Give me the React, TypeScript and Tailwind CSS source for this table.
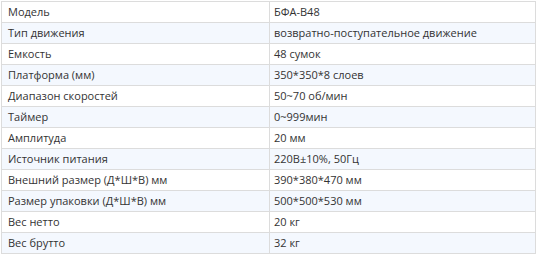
import React from "react";

const rows: [string, string][] = [
  ["Модель", "БФА-B48"],
  ["Тип движения", "возвратно-поступательное движение"],
  ["Емкость", "48 сумок"],
  ["Платформа (мм)", "350*350*8 слоев"],
  ["Диапазон скоростей", "50~70 об/мин"],
  ["Таймер", "0~999мин"],
  ["Амплитуда", "20 мм"],
  ["Источник питания", "220В±10%, 50Гц"],
  ["Внешний размер (Д*Ш*В) мм", "390*380*470 мм"],
  ["Размер упаковки (Д*Ш*В) мм", "500*500*530 мм"],
  ["Вес нетто", "20 кг"],
  ["Вес брутто", "32 кг"],
];

export default function App() {
  return (
    <div className="w-[542px] h-[260px] bg-white pt-px pl-px">
      <table
        className="w-[535px] border-collapse text-[11px] text-[#333]"
        style={{ fontFamily: '"Open Sans", "Noto Sans", sans-serif' }}
      >
        <tbody>
          {rows.map(([k, v], i) => (
            <tr key={k} className={i % 2 === 1 ? "h-[21px] bg-[#f4f8fe]" : "h-[21px] bg-white"}>
              <td className="w-[268px] border border-[#dcdcdc] px-[6px] py-0 leading-[20px]">
                {k}
              </td>
              <td className="border border-[#dcdcdc] px-[4px] py-0 leading-[20px]">
                {v}
              </td>
            </tr>
          ))}
        </tbody>
      </table>
    </div>
  );
}
